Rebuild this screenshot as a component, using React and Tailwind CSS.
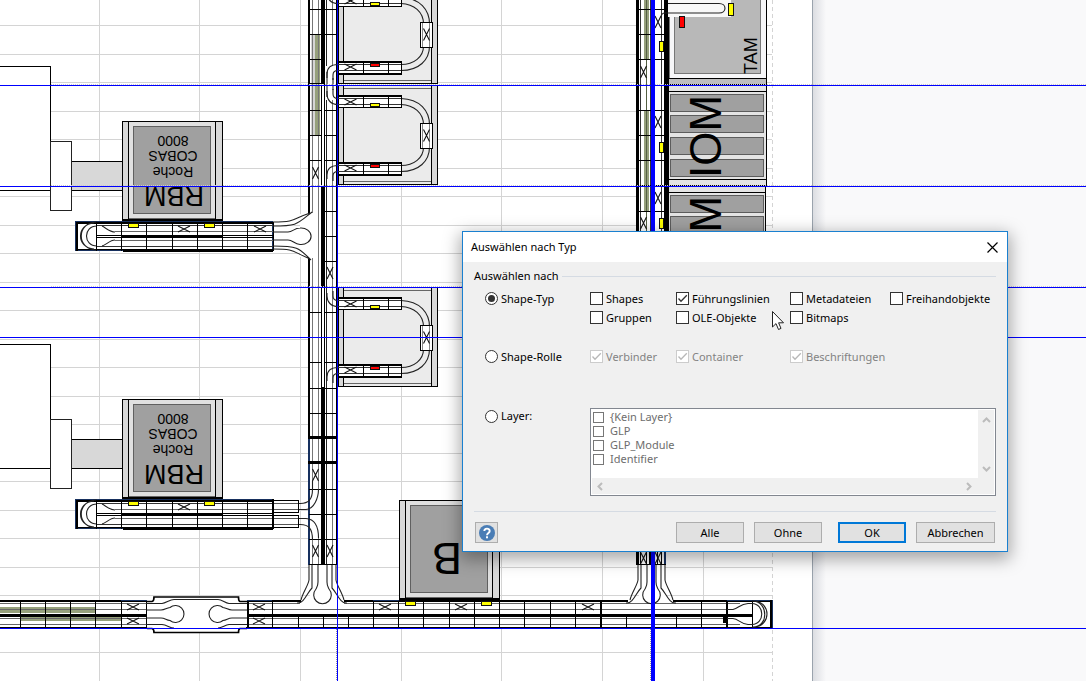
import React from "react";

const BLUE = "#0000ff";
const RAIL = { fill: "none", stroke: "#222", strokeWidth: 1.1 };
const range = (n) => Array.from({ length: n }, (_, i) => i);

function Cross({ x, y, vertical = false }) {
  const w = vertical ? 3 : 6;
  const h = vertical ? 6 : 3;
  return <path d={`M${x - w} ${y - h}L${x + w} ${y + h}M${x + w} ${y - h}L${x - w} ${y + h}`} stroke="#111" strokeWidth="1.1" />;
}

function Marker({ x, y, w = 10, h = 4, color = "#ffff00" }) {
  return <rect x={x + 0.5} y={y + 0.5} width={w - 1} height={h} fill={color} stroke="#111" shapeRendering="crispEdges" />;
}

function Ticks({ xs, y1, y2, width = 1 }) {
  return <path d={xs.map((x) => `M${x + 0.5} ${y1}V${y2}`).join("")} stroke="#000" strokeWidth={width} shapeRendering="crispEdges" />;
}

function Rungs({ ys, x1, x2, width = 1 }) {
  return <path d={ys.map((y) => `M${x1} ${y + 0.5}H${x2}`).join("")} stroke="#000" strokeWidth={width} shapeRendering="crispEdges" />;
}

function Module({ x, y, h = 98, children }) {
  return (
    <g transform={`translate(${x} ${y})`} shapeRendering="crispEdges">
      <rect x="0.5" y="0.5" width="100" height={h} fill="#d8d8d8" stroke="#000" />
      <rect x="6.5" y="0.5" width="87" height={h} fill="#e0e0e0" stroke="#000" />
      <rect x="11.5" y="5.5" width="77" height="87" fill="#a0a0a0" stroke="#606060" />
      <path d="M7 97.5H93" stroke="#666" />
      <path d="M0 99.5H101" stroke="#000" strokeWidth="3" />
      {children}
    </g>
  );
}

function Analyzer({ y }) {
  const cy = y - 121;
  return (
    <g>
      <g transform={`translate(0 ${cy})`} shapeRendering="crispEdges">
        <rect x="-10" y="66.5" width="60.5" height="124" fill="#fff" stroke="#000" />
        <rect x="50.5" y="161.5" width="72" height="29" fill="#d8d8d8" stroke="#000" />
        <rect x="50.5" y="141.5" width="21" height="69" fill="#fff" stroke="#222" />
      </g>
      <Module x={122} y={y} />
      <g fontFamily="Liberation Sans, Arial, sans-serif" textAnchor="middle" fontSize="14">
        <text transform={`translate(173 ${y + 15}) rotate(180)`}>8000</text>
        <text transform={`translate(173 ${y + 30}) rotate(180)`}>COBAS</text>
        <text transform={`translate(173 ${y + 46}) rotate(180)`}>Roche</text>
        <text transform={`translate(174 ${y + 66}) rotate(180)`} fontSize="27">RBM</text>
      </g>
      <g transform={`translate(0 ${cy})`}>
        <g shapeRendering="crispEdges">
          <rect x="75.5" y="221.5" width="197" height="29" fill="#fff" stroke="#17305e" />
          <path d="M76 223H273M123 250.5H273M77 222V251" stroke="#000" strokeWidth="2" fill="none" />
          <path d="M77 249.5H273M97 235.5H273M97 237.5H273" stroke="#000" fill="none" />
          <path d="M122 236.5H222" stroke="#000" />
          <path d="M115 231.5H273M115 240.5H273" stroke="#666" strokeWidth="1" />
          <path d="M97 225.5H273M97 246.5H273" stroke="#333" />
        </g>
        <path d="M97 222C76 222 76 250 97 250M94 223C76 224 76 248 94 249M97 226C83 226 83 246 97 246M102 226C106 228 110 232 115 232M102 246C106 245 110 240 115 240" {...RAIL} />
        <Ticks xs={[96, 121, 146, 172, 197, 222, 247, 273]} y1={222} y2={251} />
        <Cross x={184} y={229} />
        <Marker x={128} y={223} w={11} />
        <Marker x={204} y={223} w={11} />
      </g>
    </g>
  );
}

function TurnModule({ y }) {
  return (
    <g transform={`translate(0 ${y})`}>
      <g shapeRendering="crispEdges">
        <rect x="338" y="0.5" width="99.5" height="99" fill="#d8d8d8" stroke="#000" />
        <rect x="343.5" y="0.5" width="88" height="99" fill="#ebebeb" stroke="#000" />
        <path d="M344 3.5H431M344 96.5H431" stroke="#666" />
      </g>
      <path d="M401 13.5C420 14 429.5 26 429.5 40M401 19.5C414 20 423.5 28 423.5 40M429.5 62C429.5 76 419 86.5 401 86.5M423.5 62C423.5 73 414 80.5 401 80.5" {...RAIL} />
      <g shapeRendering="crispEdges">
        <rect x="420.5" y="38.5" width="12" height="25" fill="#fff" stroke="#000" />
        <path d="M422.5 39V63M429.5 39V63" stroke="#888" />
        <rect x="338.5" y="10.5" width="63" height="12" fill="#fff" stroke="#000" />
        <rect x="338.5" y="77.5" width="63" height="12" fill="#fff" stroke="#000" />
        <path d="M338 11H402M338 78H402M338 90H402" stroke="#000" strokeWidth="2" />
        <path d="M338 13.5H401M338 19.5H401M338 80.5H401M338 86.5H401" stroke="#333" />
      </g>
      <Ticks xs={[363, 388]} y1={11} y2={22} />
      <Ticks xs={[363, 388]} y1={78} y2={89} />
      <Cross x={426.5} y={50.5} vertical />
      <Cross x={350.5} y={17} />
      <Cross x={350.5} y={83} />
      <Marker x={370} y={18} h={3} />
      <Marker x={370} y={79} h={3} color="#ff0000" />
      <path d="M327 6V9C327 15 331 19.5 338 19.5M333 4V9C333 12 335 13.5 338 13.5" {...RAIL} />
      <path d="M338 80.5C331 80.5 327 84 327 90V94M338 86.5C335 86.5 333 88 333 91V96" {...RAIL} />
    </g>
  );
}

function Junction({ x }) {
  return (
    <g transform={`translate(${x} 0)`}>
      <path d="M-13 565L-12 601H15L14 565Z" fill="#fff" />
      <path d="M-13 565V580C-14 586 -19 592 -21 600M-10 565V588C-15 593 -18 604 -25 603M14 565V580C15 586 20 592 22 600M10 565V588C15 593 18 604 25 603" {...RAIL} />
      <path d="M-4 565V582C-4 586 -5 587 -6 589A8.8 8.8 0 1 0 7 589C6 587 5 586 5 582V565" {...RAIL} />
    </g>
  );
}

function LeftBus() {
  return (
    <g>
      <rect x="309" y="0" width="28" height="565" fill="#fff" />
      <rect x="311" y="34" width="4" height="101" fill="#d5d5d5" />
      <rect x="315" y="34" width="5" height="101" fill="#96a07c" />
      <g shapeRendering="crispEdges">
        <path d="M309 0V213M309 258V438" stroke="#000" strokeWidth="2" />
        <path d="M309 438V565" stroke="#17305e" strokeWidth="2" />
        <path d="M321.5 0V565M324.5 0V565M336.5 0V565" stroke="#000" />
        <path d="M326.5 0V565" stroke="#222" />
        <path d="M322.5 0V84M322.5 186V287M322.5 387V565" stroke="#000" strokeWidth="3" />
        <path d="M312.5 0V213M312.5 258V490M318.5 0V490M332.5 0V565M318.5 538V565M312.5 538V565" stroke="#777" />
      </g>
      <Rungs ys={[9, 34, 59, 83, 110, 135, 160, 287, 312, 362, 388, 413, 489, 514, 539, 564]} x1={309} x2={322} />
      <Rungs ys={[9, 34, 83, 110, 135, 160, 186, 211, 236, 261, 287, 312, 362, 388, 413, 489, 514, 539, 564]} x1={324} x2={337} />
      <Rungs ys={[437, 462]} x1={308} x2={337} width={3} />
      <rect x="325" y="66" width="11" height="34" fill="#fff" />
      <path d="M327 72V97M333 78V90" {...RAIL} />
      <Cross x={315.5} y={173} vertical />
      <Cross x={330} y={273} vertical />
      <Cross x={315.5} y={475} vertical />
      <Cross x={315.5} y={551} vertical />
      <Cross x={330} y={551} vertical />
      <rect x="300" y="214" width="17" height="43" fill="#fff" />
      <path d="M318.5 213V258" stroke="#777" shapeRendering="crispEdges" />
      <path d="M273 222C297 222 292 219 310 213M273 226C298 226 297 224 312 212M273 249C296 249 291 251 310 259M273 246C298 246 299 248 311 260" {...RAIL} />
      <path d="M273 232H288C293 232 294 228 300 228A10 8.3 0 1 1 300 244.5C294 244 293 240 288 240H273" {...RAIL} />
    </g>
  );
}

function LowerBranch() {
  return (
    <g>
      <g shapeRendering="crispEdges">
        <rect x="273.5" y="500.5" width="25" height="12" fill="#fff" stroke="#000" />
        <rect x="273.5" y="515.5" width="25" height="12" fill="#fff" stroke="#000" />
        <path d="M274 503.5H298M274 509.5H298M274 518.5H298M274 524.5H298" stroke="#555" />
        <path d="M272.5 499V529" stroke="#000" strokeWidth="2" />
      </g>
      <path d="M299 503.5C309 504 312.5 499 312.5 489V481M299 509.5H306C314 509 318.5 498 318.5 489M299 518.5H306C314 519 318.5 525 318.5 538M299 524.5C309 524 312.5 529 312.5 540" {...RAIL} />
    </g>
  );
}

function RightBus() {
  return (
    <g>
      <rect x="637" y="0" width="31" height="565" fill="#fff" />
      <g fill="#96a07c">
        <rect x="644" y="0" width="5" height="59" />
        <rect x="644" y="110" width="5" height="101" />
      </g>
      <g shapeRendering="crispEdges">
        <path d="M637.5 0V240" stroke="#000" strokeWidth="3" />
        <path d="M640.5 0V232M650.5 0V240M661.5 0V240" stroke="#333" />
        <path d="M646.5 0V240" stroke="#556043" />
        <path d="M666 0V240" stroke="#000" strokeWidth="4" />
        <path d="M637.5 540V565" stroke="#000" strokeWidth="3" />
        <path d="M665 540V565" stroke="#17305e" strokeWidth="2" />
        <path d="M640.5 540V565M646.5 540V565M657.5 540V565M661.5 540V565M637 564.5H666" stroke="#000" />
        <path d="M650.5 540V565" stroke="#000" strokeWidth="3" />
      </g>
      <Rungs ys={[9, 34, 59, 110, 135, 160, 185, 211]} x1={637} x2={665} />
      <Cross x={643.5} y={72} vertical />
      <Cross x={643.5} y={223} vertical />
      <Cross x={643.5} y={558} vertical />
      <Cross x={658} y={558} vertical />
      <Cross x={658} y={22} vertical />
      <Cross x={658} y={122} vertical />
      <Cross x={658} y={198} vertical />
      <Marker x={659} y={41} w={5} h={10} />
      <Marker x={659} y={142} w={5} h={10} />
      <Marker x={659} y={218} w={5} h={10} />
    </g>
  );
}

function StorageModule({ y, right }) {
  return (
    <g transform={`translate(0 ${y})`} shapeRendering="crispEdges">
      <rect x="668.5" y="0.5" width={right - 668} height="100" fill="#e4e4e4" stroke="#000" />
      <path d={`M668 6.5H${right}M668 94.5H${right}`} stroke="#000" />
      {[9, 30, 52, 74].map((t) => (
        <rect key={t} x="670.5" y={t + 0.5} width="93" height="17" fill="#a0a0a0" stroke="#5c5c5c" />
      ))}
      <text transform="translate(721 93) rotate(-90)" fontSize="44" fontFamily="Liberation Sans, Arial, sans-serif">IOM</text>
    </g>
  );
}

function TamModule() {
  return (
    <g>
      <g shapeRendering="crispEdges">
        <rect x="668.5" y="-5" width="98" height="83.5" fill="#f6f6f8" stroke="#000" />
        <rect x="668.5" y="78.5" width="98" height="6" fill="#bebebe" stroke="#000" />
        <path d="M669.5 17V78" stroke="#777" />
        <rect x="674.5" y="-5" width="86" height="78.5" fill="#b8b8b8" stroke="#777" />
        <rect x="668" y="0" width="63" height="17" fill="#f8f8f8" />
      </g>
      <path d="M668 3.5H719C727 3.5 727 13 719 13H665C662 13 661 16 661 18" {...RAIL} />
      <Marker x={728} y={3} w={6} h={12} />
      <Marker x={679} y={16} w={6} h={11} color="#ff0000" />
      <text transform="translate(757 74) rotate(-90)" fontSize="18" fontFamily="Liberation Sans, Arial, sans-serif">TAM</text>
    </g>
  );
}

function BottomBus() {
  return (
    <g>
      <rect x="0" y="600" width="772" height="28" fill="#fff" />
      <g fill="#96a07c">
        <rect x="0" y="607" width="95" height="6" />
        <rect x="20" y="615" width="101" height="6" />
      </g>
      <g shapeRendering="crispEdges">
        <path d="M0 600.5H147M247 600.5H301M344 600.5H628M673 600.5H772" stroke="#000" strokeWidth="2" />
        <path d="M0 614.5H146M247 614.5H752" stroke="#000" strokeWidth="2" />
        <path d="M0 616.5H146M247 616.5H752M0 627.5H153M240 627.5H772" stroke="#000" />
        <path d="M0 603.5H146M247 603.5H300M344 603.5H740M0 609.5H146M247 609.5H733M0 618.5H146M247 618.5H733M0 624.5H146M247 624.5H740" stroke="#666" />
        <path d="M121 600H147M247 600H272M373 600H399M727 600H772V628" stroke="#17305e" fill="none" />
      </g>
      <Ticks xs={[20, 45, 70, 95, 121, 146]} y1={601} y2={628} />
      <Ticks xs={[247, 373, 398, 423, 449, 474, 499, 524, 550, 575, 701]} y1={601} y2={628} />
      <Ticks xs={[272]} y1={601} y2={628} />
      <Ticks xs={[298, 323, 348, 626, 676]} y1={616} y2={628} />
      <Ticks xs={[247, 600, 726]} y1={601} y2={628} width={2} />
      <rect x="723" y="615" width="4" height="8" />
      <g shapeRendering="crispEdges">
        <path d="M147 601H154V597H238V601H246V628H238V632H154V628H147Z" fill="#fff" />
      </g>
      <path d="M147 601.500H152Q154 601 154 597H238.500Q238.500 601 240 601.500H247M147 628.500H152Q154 629 154 632.500H238.500Q238.500 629 240 628.500H247" fill="none" stroke="#000" strokeWidth="1.700" />
      <path d="M146 603.5H162C166 603 170 599.5 174 599.5H218C222 599.5 225 603 229 603.5H247M146 624.5H162C167 625 170 628 174 628M218 628C222 628 225 625 229 624.5H247" {...RAIL} />
      <path d="M146 610H161C165 610 166 608 170 607.5A8.5 8.5 0 1 1 170 620.5C166 620 165 618 161 618H146M247 610H232C228 610 227 608 223 607.5A8.5 8.5 0 1 0 223 620.5C227 620 228 618 232 618H247" {...RAIL} />
      {[133, 259].map((x) => (
        <g key={x}>
          <Cross x={x} y={607} />
          <Cross x={x} y={621} />
        </g>
      ))}
      {[385, 461, 588].map((x) => <Cross key={x} x={x} y={607} />)}
      <rect x="752.5" y="601.5" width="18" height="26" fill="#fff" stroke="#000" />
      <path d="M727 609.5H733C739 608 740 604 748 603.5H752C765 604 765 624 752 624.5H748C740 624 739 619 733 618.5H727M755 601C771 603 771 625 755 627M752 601C769 601 769 628 752 627" {...RAIL} />
      <path d="M771 600V628" stroke="#000" strokeWidth="2" />
      <Junction x={322} />
      <Junction x={651} />
    </g>
  );
}

function Guides() {
  return (
    <g shapeRendering="crispEdges" stroke={BLUE}>
      {[84, 185, 286].map((y) => (
        <line key={y} x1="51" x2="100%" y1={y + 0.5} y2={y + 0.5} stroke="#ccc" strokeDasharray="1 1" />
      ))}
      <line x1="336.5" x2="336.5" y1="629" y2="100%" stroke="#999" strokeDasharray="1 1" />
      <line x1="650.5" x2="650.5" y1="629" y2="100%" stroke="#999" strokeDasharray="1 1" />
      {[85, 186, 287, 337, 628].map((y) => (
        <line key={y} x1="0" x2="100%" y1={y + 0.5} y2={y + 0.5} />
      ))}
      <line x1="337.5" x2="337.5" y1="0" y2="100%" />
      <line x1="653" x2="653" y1="0" y2="100%" strokeWidth="4" />
    </g>
  );
}

function FloorPlan() {
  return (
    <svg className="block h-screen w-full" role="img" aria-label="Visio">
      <defs>
        <linearGradient id="edge">
          <stop offset="0" stopColor="#d9dbe0" />
          <stop offset="1" stopColor="#f9f9fa" />
        </linearGradient>
      </defs>
      <rect width="812" height="100%" fill="#fff" />
      <rect x="812" width="14" height="100%" fill="url(#edge)" />
      <g shapeRendering="crispEdges" stroke="#d4d4d4">
        {range(25).map((i) => {
          const y = Math.round(25 + i * 28.5) + 0.5;
          return <line key={i} x1="0" x2="772" y1={y} y2={y} />;
        })}
        {[99, 199, 300, 401, 501, 602, 703].map((x) => (
          <line key={x} x1={x + 0.5} x2={x + 0.5} y1="0" y2="100%" />
        ))}
        <line x1="772.5" x2="772.5" y1="0" y2="100%" strokeDasharray="4 3" />
        <line x1="812.5" x2="812.5" y1="0" y2="100%" stroke="#9aa3ad" />
      </g>
      <Analyzer y={121} />
      <Analyzer y={399} />
      <Cross x={260} y={229} />
      <LeftBus />
      <LowerBranch />
      <TurnModule y={-16} />
      <TurnModule y={85} />
      <TurnModule y={287} />
      <RightBus />
      <TamModule />
      <StorageModule y={85} right={766} />
      <StorageModule y={186} right={765} />
      <BottomBus />
      <Module x={399} y={500} />
      <text transform="translate(462 543) rotate(180)" textAnchor="start" fontSize="45" fontFamily="Liberation Sans, Arial, sans-serif">B</text>
      <Marker x={405} y={601} w={11} />
      <Marker x={481} y={601} w={11} />
      <Guides />
    </svg>
  );
}

function Check({ label, checked = false, disabled = false }) {
  return (
    <label className={disabled ? "flex items-center gap-[3px] text-[#838383]" : "flex items-center gap-[3px]"}>
      <span className="grid size-[13px] shrink-0">
        <input
          type="checkbox"
          defaultChecked={checked}
          disabled={disabled}
          className="peer col-start-1 row-start-1 size-[13px] appearance-none border border-[#333] bg-white disabled:border-[#ccc]"
        />
        <svg viewBox="0 0 13 13" className="pointer-events-none invisible col-start-1 row-start-1 size-[13px] peer-checked:visible" fill="none" stroke={disabled ? "#b8b8b8" : "#333"} strokeWidth="1.3">
          <path d="M2.5 6.5L5 9.3L10.8 3.2" />
        </svg>
      </span>
      <span className="whitespace-nowrap">{label}</span>
    </label>
  );
}

function Radio({ label, checked = false }) {
  return (
    <label className="flex items-center gap-[3px]">
      <span className="grid size-[13px] shrink-0 place-items-center">
        <input type="radio" name="mode" defaultChecked={checked} className="peer col-start-1 row-start-1 size-[13px] appearance-none rounded-full border border-[#333] bg-white" />
        <span className="pointer-events-none invisible col-start-1 row-start-1 size-[7px] rounded-full bg-[#333] peer-checked:visible" />
      </span>
      <span className="whitespace-nowrap">{label}</span>
    </label>
  );
}

const ARROWS = {
  up: "M1 6L4.5 2.5L8 6",
  down: "M1 3L4.5 6.5L8 3",
  left: "M6 1L2.5 4.5L6 8",
  right: "M3 1L6.5 4.5L3 8",
};

function ScrollArrow({ dir, label }) {
  return (
    <button type="button" disabled aria-label={label} className="grid size-4 place-items-center">
      <svg viewBox="0 0 9 9" className="size-[9px]" fill="none" stroke="#bcbcbc" strokeWidth="2">
        <path d={ARROWS[dir]} />
      </svg>
    </button>
  );
}

function LayerList() {
  return (
    <div className="col-span-4 flex h-[88px] flex-col border border-[#828790] bg-white p-px text-[#6d6d6d]">
      <div className="flex grow">
        <div className="grow pl-px">
          {["{Kein Layer}", "GLP", "GLP_Module", "Identifier"].map((name) => (
            <label key={name} className="flex h-3.5 items-center gap-1.5 leading-[14px]">
              <input type="checkbox" disabled className="size-[11px] appearance-none border border-[#777] bg-white" />
              <span>{name}</span>
            </label>
          ))}
        </div>
        <div className="flex flex-col justify-between bg-[#f0f0f0] py-0.5">
          <ScrollArrow dir="up" label="Nach oben" />
          <ScrollArrow dir="down" label="Nach unten" />
        </div>
      </div>
      <div className="flex justify-between bg-[#f0f0f0] pr-[18px]">
        <ScrollArrow dir="left" label="Nach links" />
        <ScrollArrow dir="right" label="Nach rechts" />
      </div>
    </div>
  );
}

const BUTTON = "h-[21px] border border-[#adadad] bg-[#e1e1e1] leading-none";

function Dialog() {
  return (
    <section role="dialog" aria-labelledby="dialog-title" className="absolute top-[231px] left-[462px] w-[546px] border border-[#1a80d0] bg-[#f0f0f0] font-['Noto_Sans','Open_Sans',sans-serif] text-[11px] leading-4 text-black shadow-[0_5px_16px_2px_rgba(0,0,0,0.35)]">
      <header className="flex h-[30px] items-center justify-between bg-white pr-[9px] pl-2">
        <h1 id="dialog-title">Auswählen nach Typ</h1>
        <button type="button" aria-label="Schließen">
          <svg viewBox="0 0 11 11" className="size-[11px]" stroke="#000" strokeWidth="1.2">
            <path d="M0.5 0.5L10.5 10.5M10.5 0.5L0.5 10.5" />
          </svg>
        </button>
      </header>
      <form className="px-[11px] pb-2" onSubmit={(e) => e.preventDefault()}>
        <div className="flex items-center gap-1 pt-1.5">
          <h2>Auswählen nach</h2>
          <div className="h-px grow bg-[#d5dbe3]" />
        </div>
        <div className="grid grid-cols-[105px_86px_114px_100px_1fr] pt-[5px] pl-[11px]">
          <div className="flex h-[19px] items-center"><Radio label="Shape-Typ" checked /></div>
          <Check label="Shapes" />
          <Check label="Führungslinien" checked />
          <Check label="Metadateien" />
          <Check label="Freihandobjekte" />
          <div className="col-start-2 flex h-[19px] items-center"><Check label="Gruppen" /></div>
          <Check label="OLE-Objekte" />
          <Check label="Bitmaps" />
        </div>
        <div className="mt-5 grid h-[19px] grid-cols-[105px_86px_114px_100px_1fr] pl-[11px]">
          <Radio label="Shape-Rolle" />
          <Check label="Verbinder" checked disabled />
          <Check label="Container" checked disabled />
          <Check label="Beschriftungen" checked disabled />
        </div>
        <div className="mt-[42px] grid grid-cols-[105px_86px_114px_100px_1fr] items-start pl-[11px]">
          <Radio label="Layer:" />
          <LayerList />
        </div>
        <div className="mt-[15px] h-px bg-[#d5dbe3]" />
        <div className="flex items-center px-px pt-2.5">
          <button type="button" aria-label="Hilfe" className="mr-auto grid h-[21px] w-[23px] place-items-center border border-[#adadad] bg-[#e1e1e1]">
            <svg viewBox="0 0 16 16" className="size-4">
              <circle cx="8" cy="8" r="8" fill="#4a7db5" />
              <path d="M5.3 6.1C5.3 2.8 10.7 2.8 10.7 6C10.7 8 8 8 8 10.2" fill="none" stroke="#fff" strokeWidth="1.9" />
              <rect x="7" y="11.3" width="2" height="2" fill="#fff" />
            </svg>
          </button>
          <div className="flex gap-2.5">
            <button type="button" className={`${BUTTON} w-[68px]`}>Alle</button>
            <button type="button" className={`${BUTTON} w-[68px]`}>Ohne</button>
            <button type="submit" className="ml-1.5 h-[21px] w-[68px] border-2 border-[#0078d7] bg-[#e1e1e1] leading-none">OK</button>
            <button type="button" className={`${BUTTON} w-[79px]`}>Abbrechen</button>
          </div>
        </div>
      </form>
    </section>
  );
}

export default function App() {
  return (
    <main className="relative min-h-screen overflow-hidden bg-[#f9f9fa]">
      <FloorPlan />
      <Dialog />
      <svg viewBox="0 0 13 20" className="pointer-events-none absolute top-[311px] left-[772px] h-5 w-[13px]" aria-hidden="true">
        <path d="M0.5 0.5V16L4 12.6L6.5 18.5L9 17.4L6.6 11.8H11.5Z" fill="#fff" stroke="#222" />
      </svg>
    </main>
  );
}
